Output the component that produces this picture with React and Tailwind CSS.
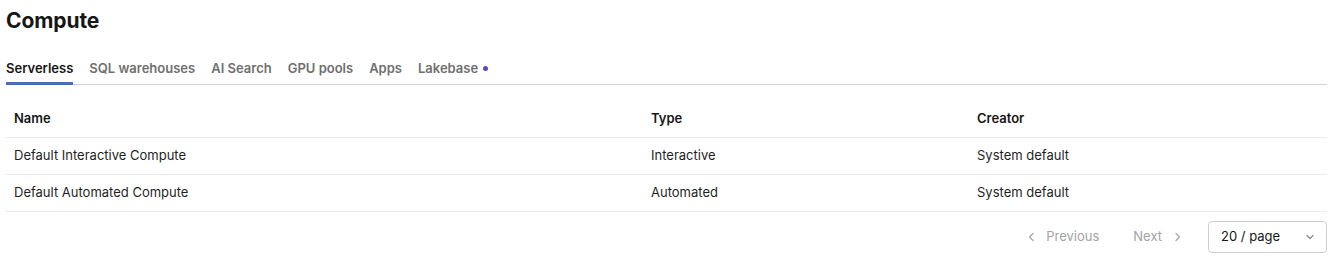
import React from "react";

const font = { fontFamily: "Inter, 'Noto Sans', 'Liberation Sans', sans-serif" };

function Chevron({ dir = "right", className = "" }) {
  const d = dir === "right" ? "M4 2.5 L7.5 6 L4 9.5" : dir === "left" ? "M8 2.5 L4.5 6 L8 9.5" : "M3 4.5 L6 7.5 L9 4.5";
  return (
    <svg width="12" height="12" viewBox="0 0 12 12" className={className} fill="none" stroke="currentColor" strokeWidth="1.2" strokeLinecap="round" strokeLinejoin="round">
      <path d={d} />
    </svg>
  );
}

export default function App() {
  const tabs = ["Serverless", "SQL warehouses", "AI Search", "GPU pools", "Apps", "Lakebase"];
  const rows = [
    ["Default Interactive Compute", "Interactive", "System default"],
    ["Default Automated Compute", "Automated", "System default"],
  ];
  return (
    <div className="w-[1339px] h-[262px] bg-white px-[6px] text-[#1f1f1f] overflow-hidden" style={font}>
      <h1 className="mt-[7px] text-[21px] leading-[28px] font-bold text-[#161616] tracking-[-0.1px]">Compute</h1>
      <div className="mt-[23px] flex gap-4 border-b border-[#d1d1d1] w-[1321px]">
        {tabs.map((t, i) => (
          <div key={t} className={"flex items-center text-[13px] leading-[20px] font-semibold pb-[4px] border-b-[3px] -mb-[1px] " + (i === 0 ? "border-[#4a6cb0] text-[#161616]" : "border-transparent text-[#6f6f6f]")}>
            {t}
            {t === "Lakebase" && <span className="ml-[5px] w-[5px] h-[5px] rounded-full bg-[#5a48c8]" />}
          </div>
        ))}
      </div>
      <div className="mt-[16px] w-[1321px] text-[13px]">
        <div className="grid grid-cols-[637px_326px_1fr] h-[37px] items-center border-b border-[#ebebeb] font-semibold text-[#161616]">
          <div className="pl-[8px]">Name</div>
          <div className="pl-[8px]">Type</div>
          <div className="pl-[8px]">Creator</div>
        </div>
        {rows.map((r) => (
          <div key={r[0]} className="grid grid-cols-[637px_326px_1fr] h-[37px] items-center border-b border-[#ebebeb] text-[#1f1f1f]">
            {r.map((c) => (
              <div key={c} className="pl-[8px]">{c}</div>
            ))}
          </div>
        ))}
      </div>
      <div className="mt-[9px] w-[1321px] flex justify-end items-center text-[13px]">
        <div className="flex items-center gap-[9px] text-[#a3a3a3]">
          <Chevron dir="left" />
          <span>Previous</span>
        </div>
        <div className="ml-[34px] flex items-center gap-[10px] text-[#a3a3a3]">
          <span>Next</span>
          <Chevron dir="right" />
        </div>
        <div className="ml-[24px] w-[119px] h-[32px] border border-[#cfcfcf] rounded-[4px] flex items-center justify-between pl-[12px] pr-[10px] text-[#161616]">
          <span>20 / page</span>
          <Chevron dir="down" className="text-[#8a8a8a]" />
        </div>
      </div>
    </div>
  );
}
